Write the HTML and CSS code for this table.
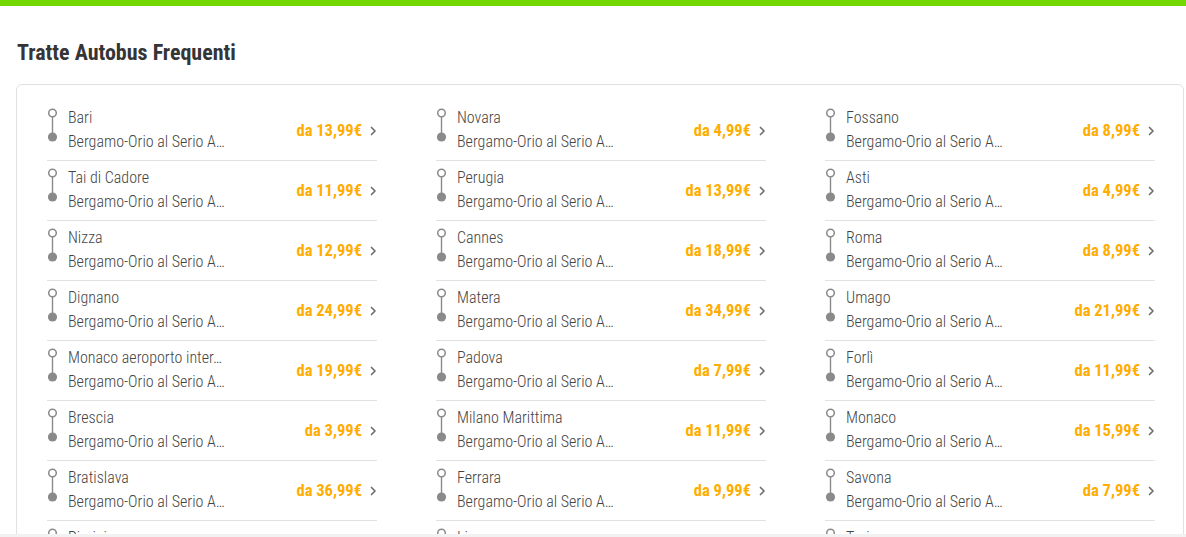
FILE: index.html
```html
<!DOCTYPE html>
<html lang="it">
<head>
<meta charset="utf-8">
<title>Tratte Autobus Frequenti</title>
<link rel="stylesheet" href="styles.css">
</head>
<body>
<div class="topbar"></div>
<main class="page">
  <h2 class="title">Tratte Autobus Frequenti</h2>
  <section class="card">
    <ul class="col" id="c1"></ul>
    <ul class="col" id="c2"></ul>
    <ul class="col" id="c3"></ul>
  </section>
</main>
<div class="bottom-shade"></div>
<script src="app.js"></script>
</body>
</html>
```
FILE: app.js
```js
const cols = [
  [["Bari","13,99"],["Tai di Cadore","11,99"],["Nizza","12,99"],["Dignano","24,99"],["Monaco aeroporto inter…","19,99"],["Brescia","3,99"],["Bratislava","36,99"],["Rimini","9,99"]],
  [["Novara","4,99"],["Perugia","13,99"],["Cannes","18,99"],["Matera","34,99"],["Padova","7,99"],["Milano Marittima","11,99"],["Ferrara","9,99"],["Livorno","9,99"]],
  [["Fossano","8,99"],["Asti","4,99"],["Roma","8,99"],["Umago","21,99"],["Forlì","11,99"],["Monaco","15,99"],["Savona","7,99"],["Torino","6,99"]]
];
const icon = '<svg class="ico" width="12" height="40" viewBox="0 0 12 40"><circle cx="5.5" cy="7" r="3.8" fill="none" stroke="#8a8a8a" stroke-width="1.5"/><line x1="5.5" y1="10.8" x2="5.5" y2="28" stroke="#8a8a8a" stroke-width="1.4"/><circle cx="5.5" cy="31" r="4.6" fill="#8a8a8a"/></svg>';
const chev = '<svg class="chev" width="8" height="12" viewBox="0 0 8 12"><path d="M2.5 2.5 L6 6 L2.5 9.5" fill="none" stroke="#707070" stroke-width="1.7" stroke-linecap="round" stroke-linejoin="round"/></svg>';
cols.forEach((list, i) => {
  const ul = document.getElementById('c' + (i + 1));
  ul.innerHTML = list.map(([city, price]) =>
    '<li class="route">' + icon +
    '<div class="names"><span class="from">' + city + '</span><span class="to">Bergamo-Orio al Serio A…</span></div>' +
    '<span class="price">da ' + price + '€</span>' + chev + '</li>'
  ).join('');
});
```
FILE: styles.css
```css
html, body {
  margin: 0;
  padding: 0;
  background: #fff;
  overflow: hidden;
  height: 537px;
}
body {
  font-family: "Roboto Condensed", "Liberation Sans Narrow", "DejaVu Sans Condensed", Roboto, sans-serif;
  color: #444;
}
.topbar {
  height: 6px;
  background: #73d700;
}
.page {
  padding: 0 2px 0 16px;
}
.title {
  margin: 33px 0 18px 1px;
  font-size: 22px;
  line-height: 27px;
  font-weight: 700;
  color: #353535;
}
.card {
  border: 1px solid #e1e1e1;
  border-radius: 6px;
  padding: 16px 28px 0 30px;
  display: grid;
  grid-template-columns: 330px 330px 330px;
  column-gap: 59px;
}
.col {
  list-style: none;
  margin: 0;
  padding: 0;
}
.route {
  display: flex;
  align-items: center;
  height: 59px;
  border-bottom: 1px solid #e1e1e1;
  box-sizing: content-box;
}
.ico {
  flex: none;
  margin: 5px 9px 0 0;
  align-self: flex-start;
}
.names {
  display: flex;
  flex-direction: column;
  font-size: 16px;
  line-height: 24px;
  font-weight: 300;
  color: #444;
  align-self: flex-start;
  padding-top: 5px;
  white-space: nowrap;
}
.price {
  margin-left: auto;
  font-size: 16.5px;
  font-weight: 700;
  color: #ffad00;
}
.chev {
  flex: none;
  margin: 0 0 0 7px;
}
.bottom-shade {
  position: fixed;
  left: 0;
  right: 0;
  bottom: 0;
  height: 3px;
  background: #f2f2f2;
}
```
